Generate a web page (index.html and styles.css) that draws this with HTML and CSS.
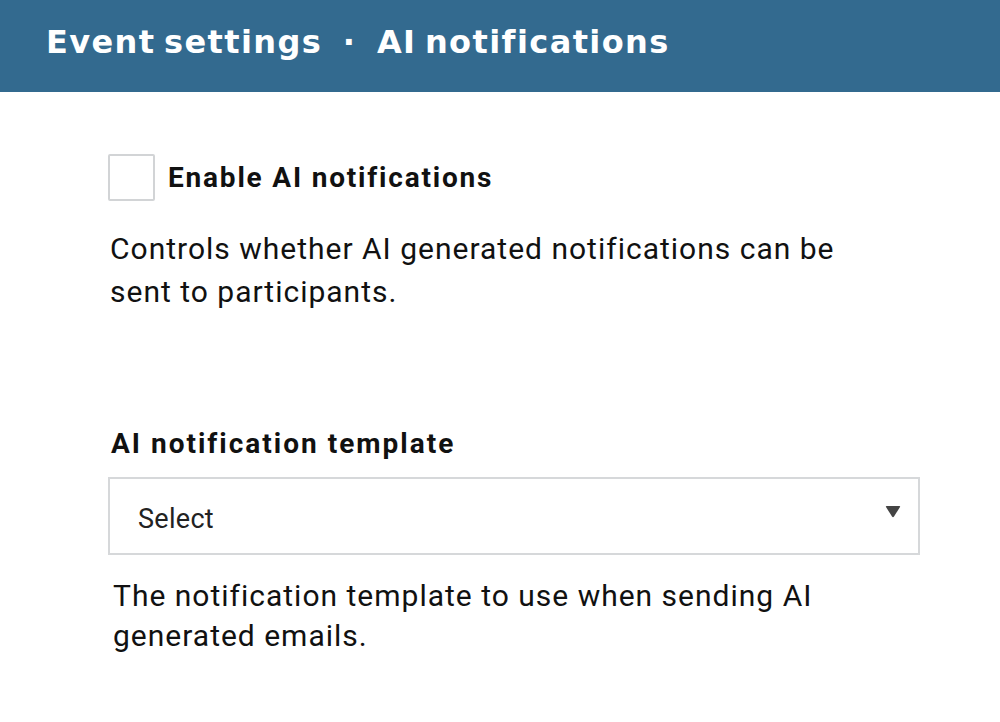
FILE: index.html
```html
<!DOCTYPE html>
<html>
<head>
<meta charset="utf-8">
<link rel="stylesheet" href="styles.css">
</head>
<body>
<header class="topbar">
  <h1 class="title">Event settings <span class="dot">·</span> AI notifications</h1>
</header>
<main class="content">
  <section class="field field-check">
    <label class="check-row">
      <span class="checkbox"></span>
      <span class="check-label">Enable AI notifications</span>
    </label>
    <p class="help">Controls whether AI generated notifications can be sent to participants.</p>
  </section>
  <section class="field field-select">
    <div class="field-label">AI notification template</div>
    <div class="select">
      <span class="select-text">Select</span>
      <svg class="caret" width="16" height="13" viewBox="0 0 16 13"><path d="M1.5 1 H14.5 Q15.5 1 15 2 L9 11.5 Q8 13 7 11.5 L1 2 Q0.5 1 1.5 1 Z" fill="#444"/></svg>
    </div>
    <p class="help help2">The notification template to use when sending AI generated emails.</p>
  </section>
</main>
</body>
</html>
```
FILE: styles.css
```css
* { box-sizing: border-box; }
html, body { margin: 0; padding: 0; background: #fff; }
body { font-family: Roboto, "Noto Sans", sans-serif; color: #111; width: 1000px; height: 722px; overflow: hidden; }
.topbar { background: #336a8f; height: 92px; display: flex; align-items: center; padding-left: 46px; }
.title { margin: 0; color: #fff; font-family: "DejaVu Sans", sans-serif; font-weight: 700; font-size: 32px; letter-spacing: 1.4px; padding-bottom: 8px; word-spacing: -4px; }
.dot { margin: 0 12px; }
.content { padding-left: 108px; padding-top: 62px; }
.check-row { display: flex; align-items: center; gap: 13px; }
.checkbox { width: 47px; height: 47px; border: 2px solid #d2d4d6; border-radius: 2px; display: block; }
.check-label { font-family: Roboto, sans-serif; font-weight: 700; font-size: 28px; letter-spacing: 1.8px; }
.help { margin: 0; font-family: Roboto, sans-serif; font-size: 30px; letter-spacing: 1px; line-height: 43px; width: 770px; padding-left: 2px; }
.field-check .help { margin-top: 26px; }
.field-select { margin-top: 114px; }
.field-label { font-family: Roboto, sans-serif; font-weight: 700; font-size: 28px; letter-spacing: 2px; padding-left: 3px; }
.select { margin-top: 17px; width: 812px; height: 78px; border: 2px solid #d6d8da; display: flex; align-items: center; justify-content: space-between; padding: 0 17px 0 28px; }
.select-text { font-family: Roboto, sans-serif; font-size: 27px; color: #222; margin-top: 6px; letter-spacing: 0.3px; }
.caret { margin-top: -10px; }
.help2 { margin-top: 21px; line-height: 40px; padding-left: 5px; width: 740px; }
```
